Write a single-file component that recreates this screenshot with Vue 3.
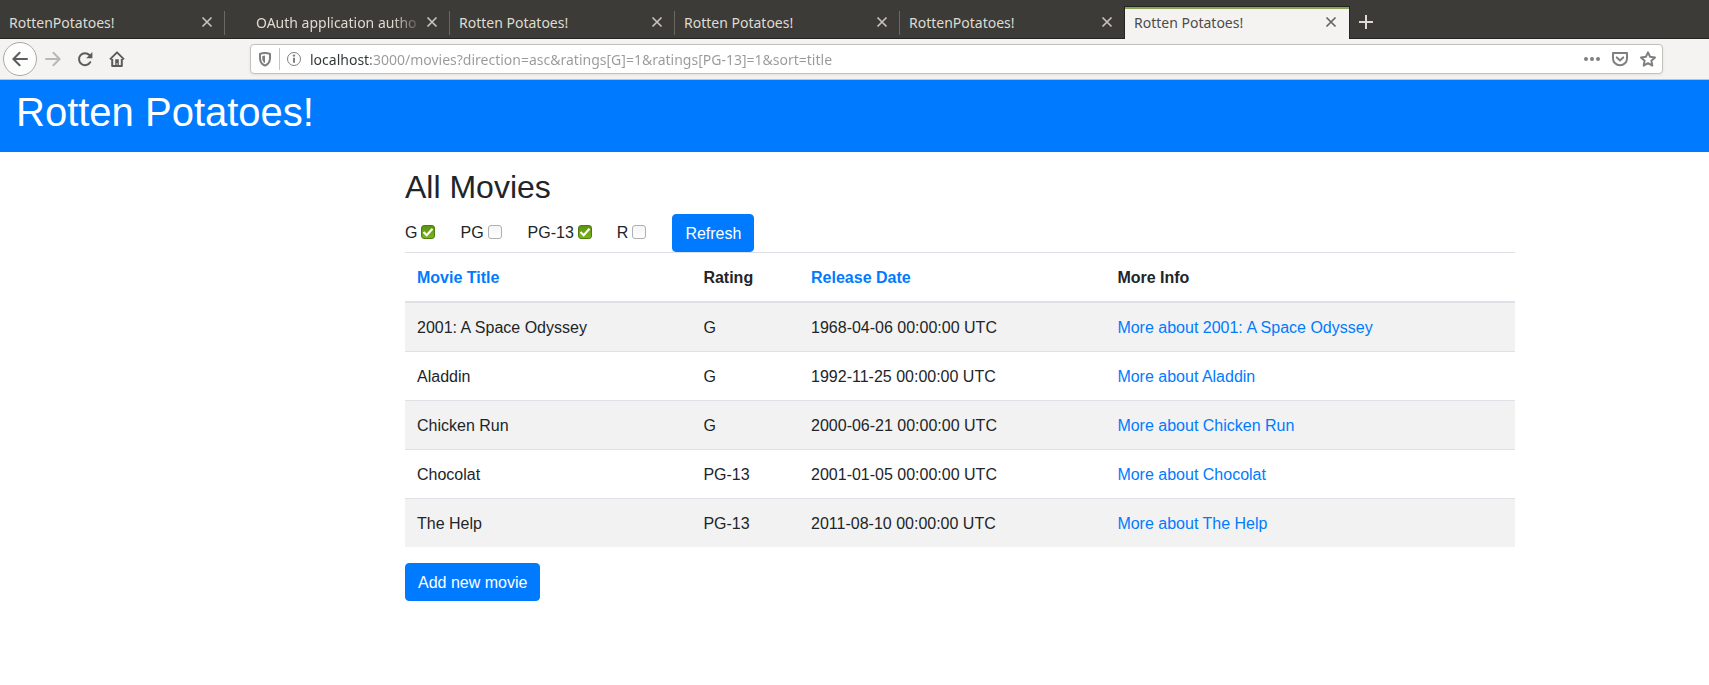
<script setup>
import { ref } from 'vue'

const tabs = [
  { id: 1, title: 'RottenPotatoes!' },
  { id: 2, title: 'OAuth application autho', indent: true },
  { id: 3, title: 'Rotten Potatoes!' },
  { id: 4, title: 'Rotten Potatoes!' },
  { id: 5, title: 'RottenPotatoes!' },
  { id: 6, title: 'Rotten Potatoes!', active: true },
]

const url = ref('localhost:3000/movies?direction=asc&ratings[G]=1&ratings[PG-13]=1&sort=title')

const ratings = ref([
  { name: 'G', checked: true },
  { name: 'PG', checked: false },
  { name: 'PG-13', checked: true },
  { name: 'R', checked: false },
])

const movies = [
  { title: '2001: A Space Odyssey', rating: 'G', date: '1968-04-06 00:00:00 UTC' },
  { title: 'Aladdin', rating: 'G', date: '1992-11-25 00:00:00 UTC' },
  { title: 'Chicken Run', rating: 'G', date: '2000-06-21 00:00:00 UTC' },
  { title: 'Chocolat', rating: 'PG-13', date: '2001-01-05 00:00:00 UTC' },
  { title: 'The Help', rating: 'PG-13', date: '2011-08-10 00:00:00 UTC' },
]
</script>

<template>
  <div class="browser">
    <div class="tab-strip">
      <div
        v-for="tab in tabs"
        :key="tab.id"
        class="tab"
        :class="{ active: tab.active, indent: tab.indent }"
      >
        <button class="tab-title" type="button">{{ tab.title }}</button>
        <button class="tab-close" type="button" aria-label="Close tab">
          <svg width="16" height="16" viewBox="0 0 16 16">
            <path d="M3.5 3.5l9 9M12.5 3.5l-9 9" stroke="currentColor" stroke-width="1.7" />
          </svg>
        </button>
      </div>
      <button class="new-tab" type="button" aria-label="New tab">
        <svg width="16" height="16" viewBox="0 0 16 16">
          <path d="M8 1v14M1 8h14" stroke="currentColor" stroke-width="2" />
        </svg>
      </button>
    </div>

    <div class="toolbar">
      <div class="nav">
        <button class="nav-button back" type="button" aria-label="Back">
          <svg width="16" height="16" viewBox="0 0 16 16" class="stroke">
            <path d="M15 8H1.6M7.6 1.8L1.4 8l6.2 6.2" stroke-linecap="round" />
          </svg>
        </button>
        <button class="nav-button forward" type="button" aria-label="Forward" disabled>
          <svg width="16" height="16" viewBox="0 0 16 16" class="stroke">
            <path d="M1 8h13.4M8.4 1.8L14.6 8l-6.2 6.2" stroke-linecap="round" />
          </svg>
        </button>
        <button class="nav-button" type="button" aria-label="Reload">
          <svg width="16" height="16" viewBox="0 0 16 16">
            <path
              d="M13.2 11.2A6 6 0 1 1 12.4 4"
              fill="none"
              stroke="currentColor"
              stroke-width="2"
              stroke-linecap="round"
            />
            <path d="M15.4 1v6.2H9.2z" fill="currentColor" />
          </svg>
        </button>
        <button class="nav-button" type="button" aria-label="Home">
          <svg width="16" height="16" viewBox="0 0 16 16" class="stroke">
            <path d="M1 8.4L8 1.4l7 7M3.2 8v7h9.6V8" stroke-linejoin="round" />
            <path d="M6.2 8.2h3.6V15H8.4v-3H7.6v3H6.2z" class="solid" />
          </svg>
        </button>
      </div>

      <div class="url-bar">
        <svg class="shield" width="16" height="16" viewBox="0 0 16 16">
          <path
            d="M8 2C6 2 4.2 2.4 3 3v4c0 4 2 6.4 5 7.6 3-1.2 5-3.6 5-7.6V3c-1.2-.6-3-1-5-1z"
            fill="none"
            stroke="currentColor"
            stroke-width="2"
            stroke-linejoin="round"
          />
          <path d="M8 4.6v7.6C6 11 5.2 9.4 5.2 7V5.2C6 4.8 7 4.6 8 4.6z" fill="currentColor" />
        </svg>
        <span class="divider"></span>
        <svg class="info" width="16" height="16" viewBox="0 0 16 16">
          <circle cx="8" cy="8" r="6.5" fill="none" stroke="currentColor" />
          <path d="M8 6.8v5" stroke="currentColor" stroke-width="2" />
          <circle cx="8" cy="4.6" r="1.2" fill="currentColor" />
        </svg>
        <input v-model="url" class="url" type="text" aria-label="Address" spellcheck="false" />
        <button class="page-action" type="button" aria-label="Page actions">
          <svg width="16" height="16" viewBox="0 0 16 16" fill="currentColor">
            <circle cx="2" cy="8" r="2" />
            <circle cx="8" cy="8" r="2" />
            <circle cx="14" cy="8" r="2" />
          </svg>
        </button>
        <button class="page-action" type="button" aria-label="Save to Pocket">
          <svg width="16" height="16" viewBox="0 0 16 16" class="stroke">
            <path d="M1 2h14v5.4a7 6.8 0 0 1-14 0z" stroke-linejoin="round" />
            <path d="M4.8 6.4L8 9.4l3.2-3" stroke-linecap="round" />
          </svg>
        </button>
        <button class="page-action" type="button" aria-label="Bookmark this page">
          <svg width="16" height="16" viewBox="0 0 16 16" class="stroke">
            <path
              d="M8 1.3l2.1 4.500 4.900.6-3.600 3.300.9 4.900L8 12.200l-4.300 2.400.9-4.900L1 6.400l4.900-.6z"
              stroke-linejoin="round"
            />
          </svg>
        </button>
      </div>
    </div>
  </div>

  <header class="banner">
    <h1>Rotten Potatoes!</h1>
  </header>

  <main class="page">
    <div class="content">
      <h2>All Movies</h2>
      <form class="filters" @submit.prevent>
        <label v-for="rating in ratings" :key="rating.name" class="rating">
          {{ rating.name }}
          <input v-model="rating.checked" type="checkbox" />
        </label>
        <button class="btn" type="submit">Refresh</button>
      </form>

      <table class="movies">
        <colgroup>
          <col class="col-title" />
          <col class="col-rating" />
          <col class="col-date" />
          <col />
        </colgroup>
        <thead>
          <tr>
            <th scope="col"><a href="#">Movie Title</a></th>
            <th scope="col">Rating</th>
            <th scope="col"><a href="#">Release Date</a></th>
            <th scope="col">More Info</th>
          </tr>
        </thead>
        <tbody>
          <tr v-for="movie in movies" :key="movie.title">
            <td>{{ movie.title }}</td>
            <td>{{ movie.rating }}</td>
            <td>{{ movie.date }}</td>
            <td><a href="#">More about {{ movie.title }}</a></td>
          </tr>
        </tbody>
      </table>

      <a class="btn" href="#">Add new movie</a>
    </div>
  </main>
</template>

<style>
body {
  background: #fff;
}
</style>

<style scoped>
* {
  box-sizing: border-box;
}

button,
input {
  margin: 0;
  padding: 0;
  border: 0;
  background: none;
  color: inherit;
  font: inherit;
}

svg {
  display: block;
}

.stroke {
  fill: none;
  stroke: currentColor;
  stroke-width: 2;
}

.solid {
  fill: currentColor;
  stroke: none;
}

.browser {
  font: 14px/20px "Noto Sans", "Open Sans", sans-serif;
}

.tab-strip {
  display: flex;
  height: 39px;
  padding-top: 6px;
  background: #3c3b37;
  box-shadow: inset 0 -1px #252421;
  color: #dfdbd2;
}

.tab {
  display: flex;
  flex: 0 1 225px;
  align-items: center;
  min-width: 0;
  padding: 0 10px 1px 9px;
  background: linear-gradient(#696863, #696863) right center / 1px 24px no-repeat;
}

.tab.indent {
  padding-left: 31px;
}

.tab:nth-child(5) {
  background: none;
}

.tab.active {
  flex-basis: 226px;
  margin-left: -1px;
  padding-bottom: 2px;
  border: 1px solid #252421;
  border-bottom: 0;
  background: #f4f3f1;
  box-shadow: inset 0 2px #87a556;
  color: #4c4c4c;
}

.tab-title {
  flex: 1;
  min-width: 0;
  padding-top: 2px;
  overflow: hidden;
  white-space: nowrap;
  text-align: left;
}

.indent .tab-title {
  mask-image: linear-gradient(to left, transparent, #000 32px);
}

.tab-close {
  flex: none;
  opacity: 0.85;
}

.new-tab {
  flex: none;
  padding: 0 8px 2px;
}

.toolbar {
  display: flex;
  align-items: center;
  height: 41px;
  padding: 0 46px 1px 3px;
  border-bottom: 1px solid #c4c1bd;
  background: #f4f3f1;
  color: #5c5c5a;
}

.nav {
  display: flex;
  flex: none;
  align-items: center;
  width: 247px;
}

.nav-button {
  display: grid;
  place-items: center;
  width: 32px;
  height: 34px;
}

.nav-button.back {
  width: 34px;
  border: 1px solid #aaa9a7;
  border-radius: 50%;
  background: #fdfdfd;
}

.nav-button.forward {
  color: #b9b8b6;
}

.url-bar {
  display: flex;
  flex: 1;
  align-items: center;
  min-width: 0;
  height: 30px;
  padding: 0 6px;
  border: 1px solid #c4c1bd;
  border-radius: 4px;
  background: #fff;
  box-shadow: 0 1px 3px rgba(0, 0, 0, 0.08);
  color: #7f7f7f;
}

.divider {
  flex: none;
  width: 1px;
  height: 22px;
  margin: 0 6px;
  background: #c4c4c4;
}

.shield,
.info {
  flex: none;
}

.url {
  flex: 1;
  min-width: 0;
  margin-left: 8px;
  padding-top: 2px;
  outline: 0;
  background: linear-gradient(to right, #2e3436 61px, #999 61px) text;
  color: transparent;
}

.page-action {
  flex: none;
  margin-left: 12px;
}

.banner {
  padding: 8px 16px;
  background: #007bff;
  color: #fff;
  font-family: "Liberation Sans", Arial, sans-serif;
}

h1,
h2 {
  margin: 0 0 8px;
  font-weight: 400;
}

h1 {
  font-size: 40px;
  line-height: 48px;
}

.page {
  display: grid;
  grid-template-columns: 405fr minmax(0, 1110px) 194fr;
  padding: 16px 0;
  color: #212529;
  font: 16px/24px "Liberation Sans", Arial, sans-serif;
}

.content {
  grid-column: 2;
}

h2 {
  font-size: 32px;
  line-height: 38px;
}

.filters {
  display: flex;
  align-items: center;
}

.rating {
  display: flex;
  align-items: center;
  gap: 4px;
  margin-right: 25px;
}

.rating:nth-child(even) {
  margin-right: 26px;
}

.rating input {
  width: 14px;
  height: 14px;
  margin-bottom: 2px;
  border: 1px solid #b0b0b0;
  border-radius: 3px;
  background: linear-gradient(#f4f4f4, #fff);
  appearance: none;
}

.rating input:checked {
  border-color: #4e7d0c;
  background:
    url("data:image/svg+xml,%3Csvg xmlns='http://www.w3.org/2000/svg' viewBox='0 0 12 12'%3E%3Cpath d='M1.5 6l3.2 3.2L10.500 2.800' fill='none' stroke='white' stroke-width='2.2'/%3E%3C/svg%3E") center / 12px no-repeat,
    linear-gradient(#5b940d, #7ab51d);
}

.btn {
  display: inline-block;
  padding: 7px 12px 5px;
  border: 1px solid #007bff;
  border-radius: 4px;
  background: #007bff;
  color: #fff;
  line-height: 24px;
}

a {
  color: #007bff;
  text-decoration: none;
}

.movies {
  width: 100%;
  margin-bottom: 16px;
  border-collapse: collapse;
}

.col-title {
  width: 25.8%;
}

.col-rating {
  width: 9.7%;
}

.col-date {
  width: 27.6%;
}

.movies th,
.movies td {
  padding: 13px 12px 11px;
  border-top: 1px solid #dee2e6;
  text-align: left;
}

.movies thead th {
  border-bottom: 2px solid #dee2e6;
}

.movies tbody tr:nth-child(odd) {
  background: #f2f2f2;
}
</style>
